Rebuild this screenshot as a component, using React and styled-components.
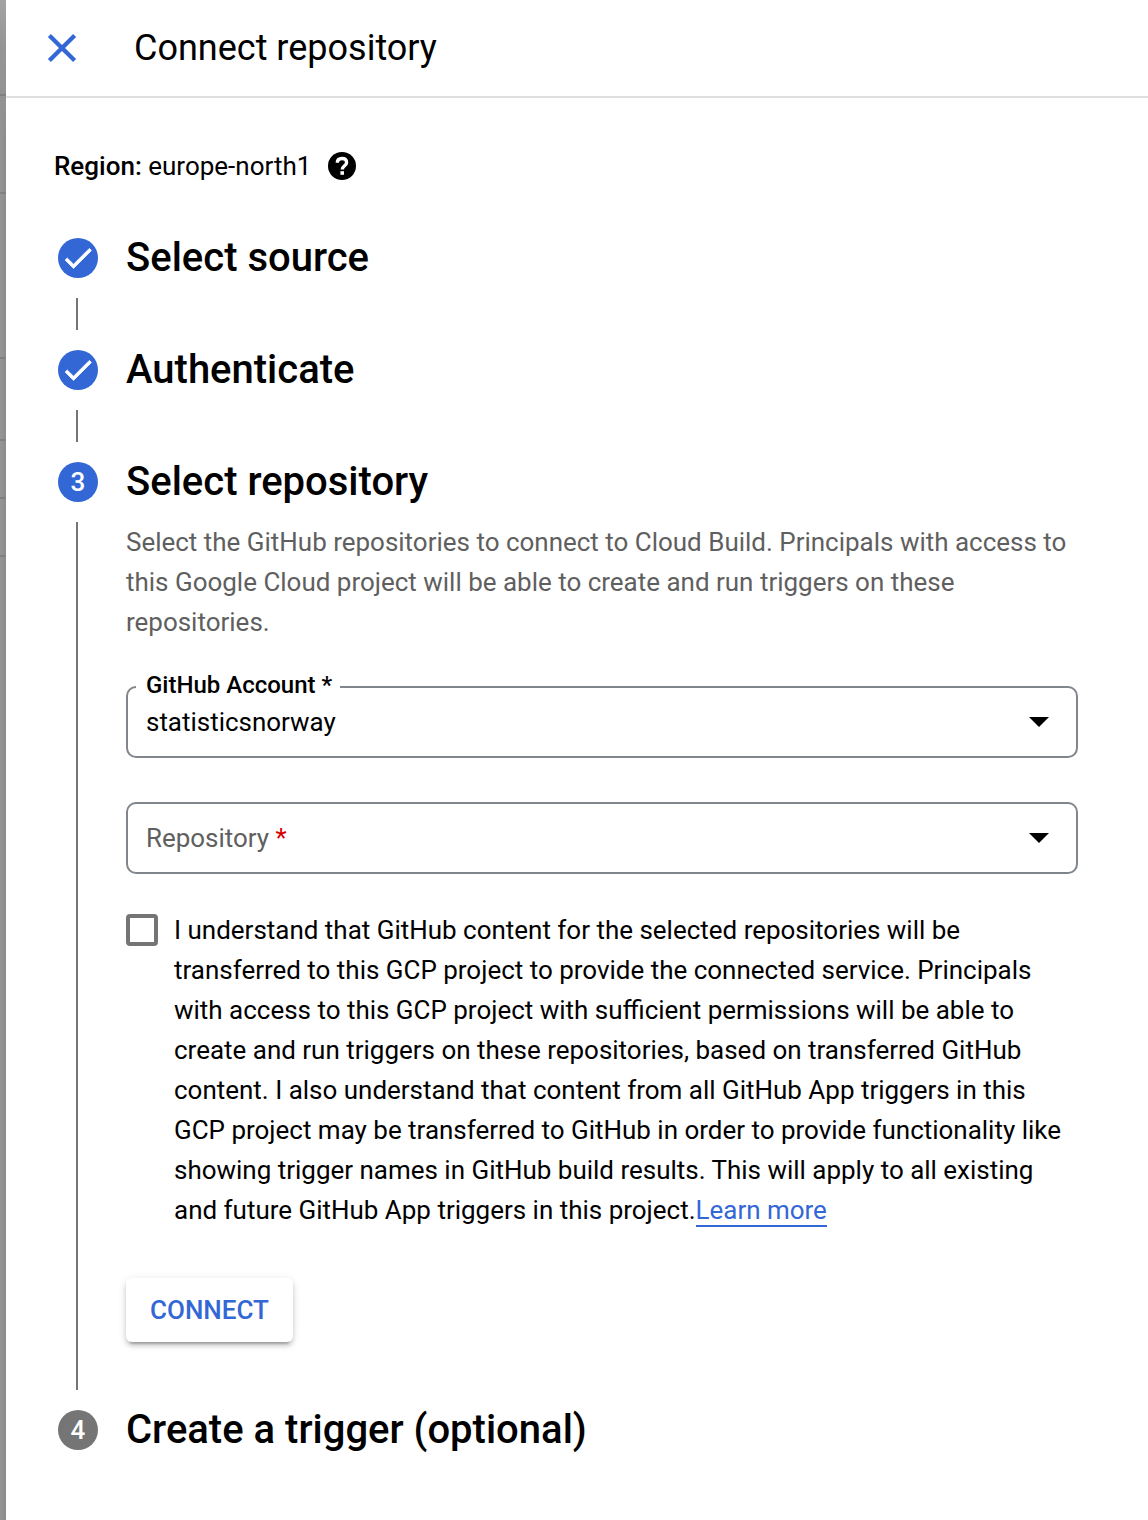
import React from "react";
import styled, { createGlobalStyle } from "styled-components";

const blue = "#3367d6";

const GlobalStyle = createGlobalStyle`
  *, *::before, *::after { box-sizing: border-box; }
  body {
    margin: 0;
    background: #fff;
    color: #000;
    font-family: Roboto, "Liberation Sans", sans-serif;
    font-size: 26px;
    line-height: 40px;
  }
`;

const Page = styled.div`
  display: flex;
  width: 1148px;
  height: 1520px;
  overflow: hidden;
`;

const Backdrop = styled.aside`
  display: flex;
  flex-direction: column;
  width: 6px;
  flex: none;
  background: linear-gradient(to bottom, #a2a2a2 0, #959595 48px, #929292 100px, rgba(146, 146, 146, 0) 140px),
    linear-gradient(to right, #959595, #8c8c8c);
`;

const BackdropRow = styled.div`
  flex: none;
  height: ${(p) => p.$height}px;
  border-bottom: 2px solid #808080;
`;

const Panel = styled.main`
  flex: 1;
  display: flex;
  flex-direction: column;
  background: #fff;
`;

const Header = styled.header`
  display: flex;
  align-items: center;
  gap: 48px;
  height: 98px;
  padding-left: 32px;
  border-bottom: 2px solid #e0e0e0;
`;

const CloseButton = styled.button`
  display: flex;
  padding: 0;
  border: 0;
  background: none;
  color: ${blue};
`;

const Title = styled.h1`
  margin: 0;
  font-size: 36px;
  font-weight: 400;
  line-height: 48px;
`;

const Content = styled.div`
  display: flex;
  flex-direction: column;
  padding: 48px 70px 0 48px;
`;

const Region = styled.div`
  display: flex;
  align-items: center;
  height: 40px;
  white-space: pre;
`;

const RegionLabel = styled.span`
  font-weight: 500;
`;

const HelpIcon = styled.svg`
  margin-left: 17px;
`;

const Stepper = styled.div`
  display: flex;
  flex-direction: column;
  padding: 52px 0 0 4px;
`;

const StepHeader = styled.div`
  display: flex;
  align-items: center;
  gap: 28px;
  height: 40px;
`;

const StepBadge = styled.span`
  display: flex;
  align-items: center;
  justify-content: center;
  flex: none;
  width: 40px;
  height: 40px;
  border-radius: 50%;
  background: ${(p) => (p.$active ? blue : "#757575")};
  color: #fff;
  font-size: 26px;
  font-weight: 500;
`;

const StepTitle = styled.h2`
  margin: 0;
  font-size: 40px;
  font-weight: 500;
  line-height: 40px;
  white-space: nowrap;
`;

const StepBody = styled.div`
  display: flex;
  gap: 48px;
  height: ${(p) => p.$height}px;
  margin: 20px 0;
  padding-left: 18px;
`;

const Connector = styled.div`
  width: 2px;
  flex: none;
  background: #757575;
`;

const Form = styled.div`
  display: flex;
  flex-direction: column;
  align-items: flex-start;
  width: 952px;
`;

const Description = styled.p`
  margin: 0;
  color: #5f5f5f;
  font-size: 25.97px;
  white-space: nowrap;
`;

const SelectBox = styled.fieldset`
  width: 952px;
  height: ${(p) => (p.$labelled ? 86 : 72)}px;
  margin: ${(p) => p.$top}px 0 0;
  padding: 0 27px 0 18px;
  border: 2px solid #80868b;
  border-radius: 10px;
  min-width: 0;
`;

const FloatingLabel = styled.legend`
  margin-left: -10px;
  padding: 0 8px 0 10px;
  height: 30px;
  font-size: 24px;
  font-weight: 500;
  line-height: 26px;
  white-space: nowrap;
`;

const SelectRow = styled.div`
  display: flex;
  align-items: center;
  justify-content: space-between;
  height: ${(p) => p.$height}px;
  font-size: 25.95px;
`;

const Placeholder = styled.span`
  color: #5f5f5f;
`;

const Required = styled.span`
  color: #d50000;
`;

const Consent = styled.label`
  display: flex;
  align-items: flex-start;
  gap: 16px;
  margin-top: 36px;
`;

const Checkbox = styled.span`
  flex: none;
  width: 32px;
  height: 32px;
  margin-top: 4px;
  border: 4px solid #757575;
  border-radius: 4px;
`;

const ConsentText = styled.span`
  font-size: 25.97px;
  white-space: nowrap;
`;

const Link = styled.a`
  color: ${blue};
  border-bottom: 2px solid ${blue};
`;

const ConnectButton = styled.button`
  width: 167px;
  height: 64px;
  margin-top: 48px;
  padding: 0;
  border: 0;
  border-radius: 6px;
  background: #fff;
  box-shadow: 0 6px 2px -4px rgba(0, 0, 0, 0.2), 0 4px 4px rgba(0, 0, 0, 0.14), 0 2px 10px rgba(0, 0, 0, 0.12);
  color: ${blue};
  font: 500 26px/40px Roboto, "Liberation Sans", sans-serif;
`;

const CheckIcon = styled.svg`
  margin-left: -1px;
`;

const Check = () => (
  <CheckIcon width="36" height="36" viewBox="0 0 24 24" fill="currentColor" stroke="currentColor" strokeWidth="0.5">
    <path d="M9 16.17 4.83 12l-1.42 1.41L9 19 21 7l-1.41-1.41z" />
  </CheckIcon>
);

const Caret = () => (
  <svg width="20" height="10" viewBox="0 0 20 10">
    <path d="M0 0h20L10 10z" />
  </svg>
);

const Step = ({ badge, active, title }) => (
  <StepHeader>
    <StepBadge $active={active}>{badge}</StepBadge>
    <StepTitle>{title}</StepTitle>
  </StepHeader>
);

const Lines = ({ lines }) =>
  lines.map((line, i) => (
    <React.Fragment key={line}>
      {i > 0 && <br />}
      {line}
    </React.Fragment>
  ));

const backdropRows = [96, 98, 165, 82, 58, 58];

const description = [
  "Select the GitHub repositories to connect to Cloud Build. Principals with access to",
  "this Google Cloud project will be able to create and run triggers on these",
  "repositories.",
];

const consent = [
  "I understand that GitHub content for the selected repositories will be",
  "transferred to this GCP project to provide the connected service. Principals",
  "with access to this GCP project with sufficient permissions will be able to",
  "create and run triggers on these repositories, based on transferred GitHub",
  "content. I also understand that content from all GitHub App triggers in this",
  "GCP project may be transferred to GitHub in order to provide functionality like",
  "showing trigger names in GitHub build results. This will apply to all existing",
  "and future GitHub App triggers in this project.",
];

export default function App() {
  return (
    <Page>
      <GlobalStyle />
      <Backdrop>
        {backdropRows.map((height, i) => (
          <BackdropRow key={i} $height={height} />
        ))}
      </Backdrop>
      <Panel>
        <Header>
          <CloseButton aria-label="Close">
            <svg width="48" height="48" viewBox="0 0 24 24" fill="none" stroke="currentColor" strokeWidth="2.15">
              <path d="M5.700 5.700 18.300 18.300M18.300 5.700 5.700 18.300" />
            </svg>
          </CloseButton>
          <Title>Connect repository</Title>
        </Header>
        <Content>
          <Region>
            <RegionLabel>Region: </RegionLabel>
            europe-north1
            <HelpIcon width="28" height="28" viewBox="0 0 28 28" fill="none">
              <circle cx="14" cy="14" r="14" fill="#000" />
              <path
                d="M9.300 10.800C9.300 8 11.200 6.500 14 6.500s4.600 1.500 4.600 3.900c0 3.300-4.300 3.500-4.300 7.100"
                stroke="#fff"
                strokeWidth="3.4"
              />
              <path d="M12.400 19.200h3.600v3.600h-3.600z" fill="#fff" />
            </HelpIcon>
          </Region>
          <Stepper>
            <Step badge={<Check />} active title="Select source" />
            <StepBody $height={32}>
              <Connector />
            </StepBody>
            <Step badge={<Check />} active title="Authenticate" />
            <StepBody $height={32}>
              <Connector />
            </StepBody>
            <Step badge="3" active title="Select repository" />
            <StepBody $height={868}>
              <Connector />
              <Form>
                <Description>
                  <Lines lines={description} />
                </Description>
                <SelectBox $top={30} $labelled>
                  <FloatingLabel>GitHub Account *</FloatingLabel>
                  <SelectRow $height={40}>
                    <span>statisticsnorway</span>
                    <Caret />
                  </SelectRow>
                </SelectBox>
                <SelectBox $top={44}>
                  <SelectRow $height={68}>
                    <Placeholder>
                      Repository <Required>*</Required>
                    </Placeholder>
                    <Caret />
                  </SelectRow>
                </SelectBox>
                <Consent>
                  <Checkbox role="checkbox" aria-checked="false" />
                  <ConsentText>
                    <Lines lines={consent} />
                    <Link>Learn more</Link>
                  </ConsentText>
                </Consent>
                <ConnectButton>CONNECT</ConnectButton>
              </Form>
            </StepBody>
            <Step badge="4" title="Create a trigger (optional)" />
          </Stepper>
        </Content>
      </Panel>
    </Page>
  );
}
